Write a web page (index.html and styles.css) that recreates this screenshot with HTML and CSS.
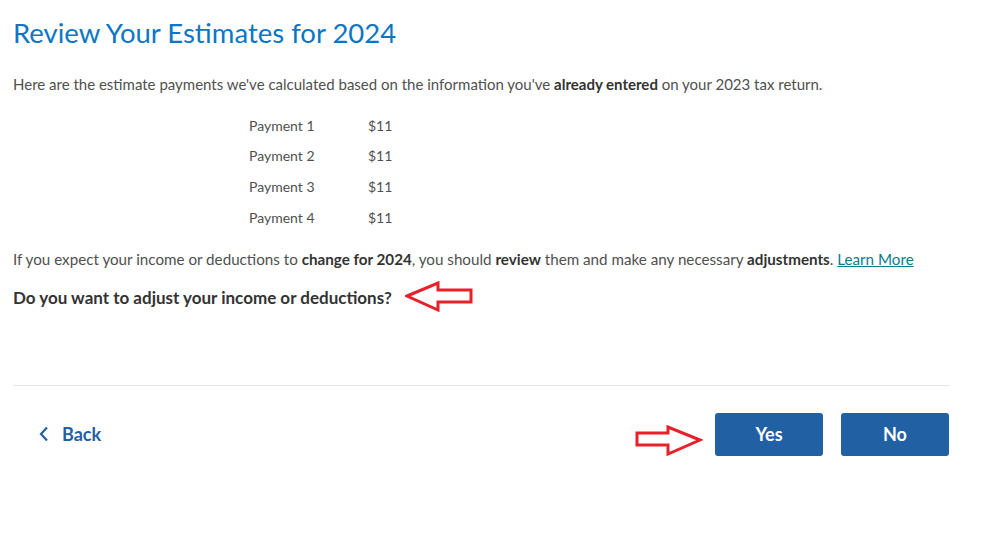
FILE: index.html
```html
<!DOCTYPE html>
<html>
<head>
  <title>Review Your Estimates for 2024</title>
  <link rel="stylesheet" href="styles.css">
</head>
<body>
  <div class="page">
    <h1 class="title">Review Your Estimates for 2024</h1>

    <p class="intro">Here are the estimate payments we've calculated based on the information you've <b>already entered</b> on your 2023 tax return.</p>

    <div class="payments">
      <div class="pay-row"><span class="pay-label">Payment 1</span><span>$11</span></div>
      <div class="pay-row"><span class="pay-label">Payment 2</span><span>$11</span></div>
      <div class="pay-row"><span class="pay-label">Payment 3</span><span>$11</span></div>
      <div class="pay-row"><span class="pay-label">Payment 4</span><span>$11</span></div>
    </div>

    <p class="note">If you expect your income or deductions to <b>change for 2024</b>, you should <b>review</b> them and make any necessary <b>adjustments</b>. <a href="#" class="learn">Learn More</a></p>

    <div class="question">
      <span>Do you want to adjust your income or deductions?</span>
      <svg class="arrow arrow-left" width="70" height="32" viewBox="0 0 70 32">
        <path d="M2 15 L33 2 L33 9 L66 9 L66 21 L33 21 L33 29 Z" fill="none" stroke="#e8202a" stroke-width="3" stroke-linejoin="miter"/>
      </svg>
    </div>

    <div class="footer">
      <a href="#" class="back">
        <svg width="12" height="16" viewBox="0 0 12 16"><path d="M9 1.5 L3 8 L9 14.5" fill="none" stroke="#2360a5" stroke-width="2.2"/></svg>
        Back
      </a>
      <div class="actions">
        <svg class="arrow" width="68" height="32" viewBox="0 0 68 32">
          <path d="M2 8 L33 8 L33 2 L65 15 L33 29 L33 20 L2 20 Z" fill="none" stroke="#e8202a" stroke-width="3" stroke-linejoin="miter"/>
        </svg>
        <button class="btn">Yes</button>
        <button class="btn">No</button>
      </div>
    </div>
  </div>
</body>
</html>
```
FILE: styles.css
```css
body{
margin: 0;
background-color: white;
color: #505050;
font-family: Lato, "Open Sans", sans-serif;
}
.page{
width: 936px;
padding: 0 13px;
}
.title{
margin: 16px 0 0 0;
font-size: 27.5px;
font-weight: normal;
color: #0a77c6;
}
.intro{
margin: 26px 0 0 0;
font-size: 15px;
}
.intro b, .note b{
color: #333;
}
.payments{
margin: 17px 0 0 236px;
font-size: 14px;
}
.pay-row{
display: flex;
height: 30.6px;
align-items: center;
}
.pay-label{
width: 119px;
}
.note{
margin: 18px 0 0 0;
font-size: 15.2px;
}
.learn{
color: #0d7d8c;
}
.question{
display: flex;
align-items: center;
gap: 13px;
margin-top: 13px;
font-size: 17px;
font-weight: bold;
color: #333;
}
.footer{
margin-top: 72px;
border-top: 1px solid #e8e8e8;
display: flex;
justify-content: space-between;
align-items: center;
padding-top: 25px;
}
.back{
display: flex;
align-items: center;
gap: 12px;
margin-left: 25px;
color: #2360a5;
font-size: 18px;
font-weight: bold;
text-decoration: none;
}
.actions{
display: flex;
align-items: center;
}
.actions .arrow{
margin: 14px 12px 0 0;
}
.btn{
width: 108px;
height: 43px;
margin-left: 18px;
border: none;
border-radius: 3px;
background-color: #2160a3;
color: white;
font-family: Lato, sans-serif;
font-size: 18px;
font-weight: bold;
}
.actions .arrow + .btn{
margin-left: 0;
}
```
